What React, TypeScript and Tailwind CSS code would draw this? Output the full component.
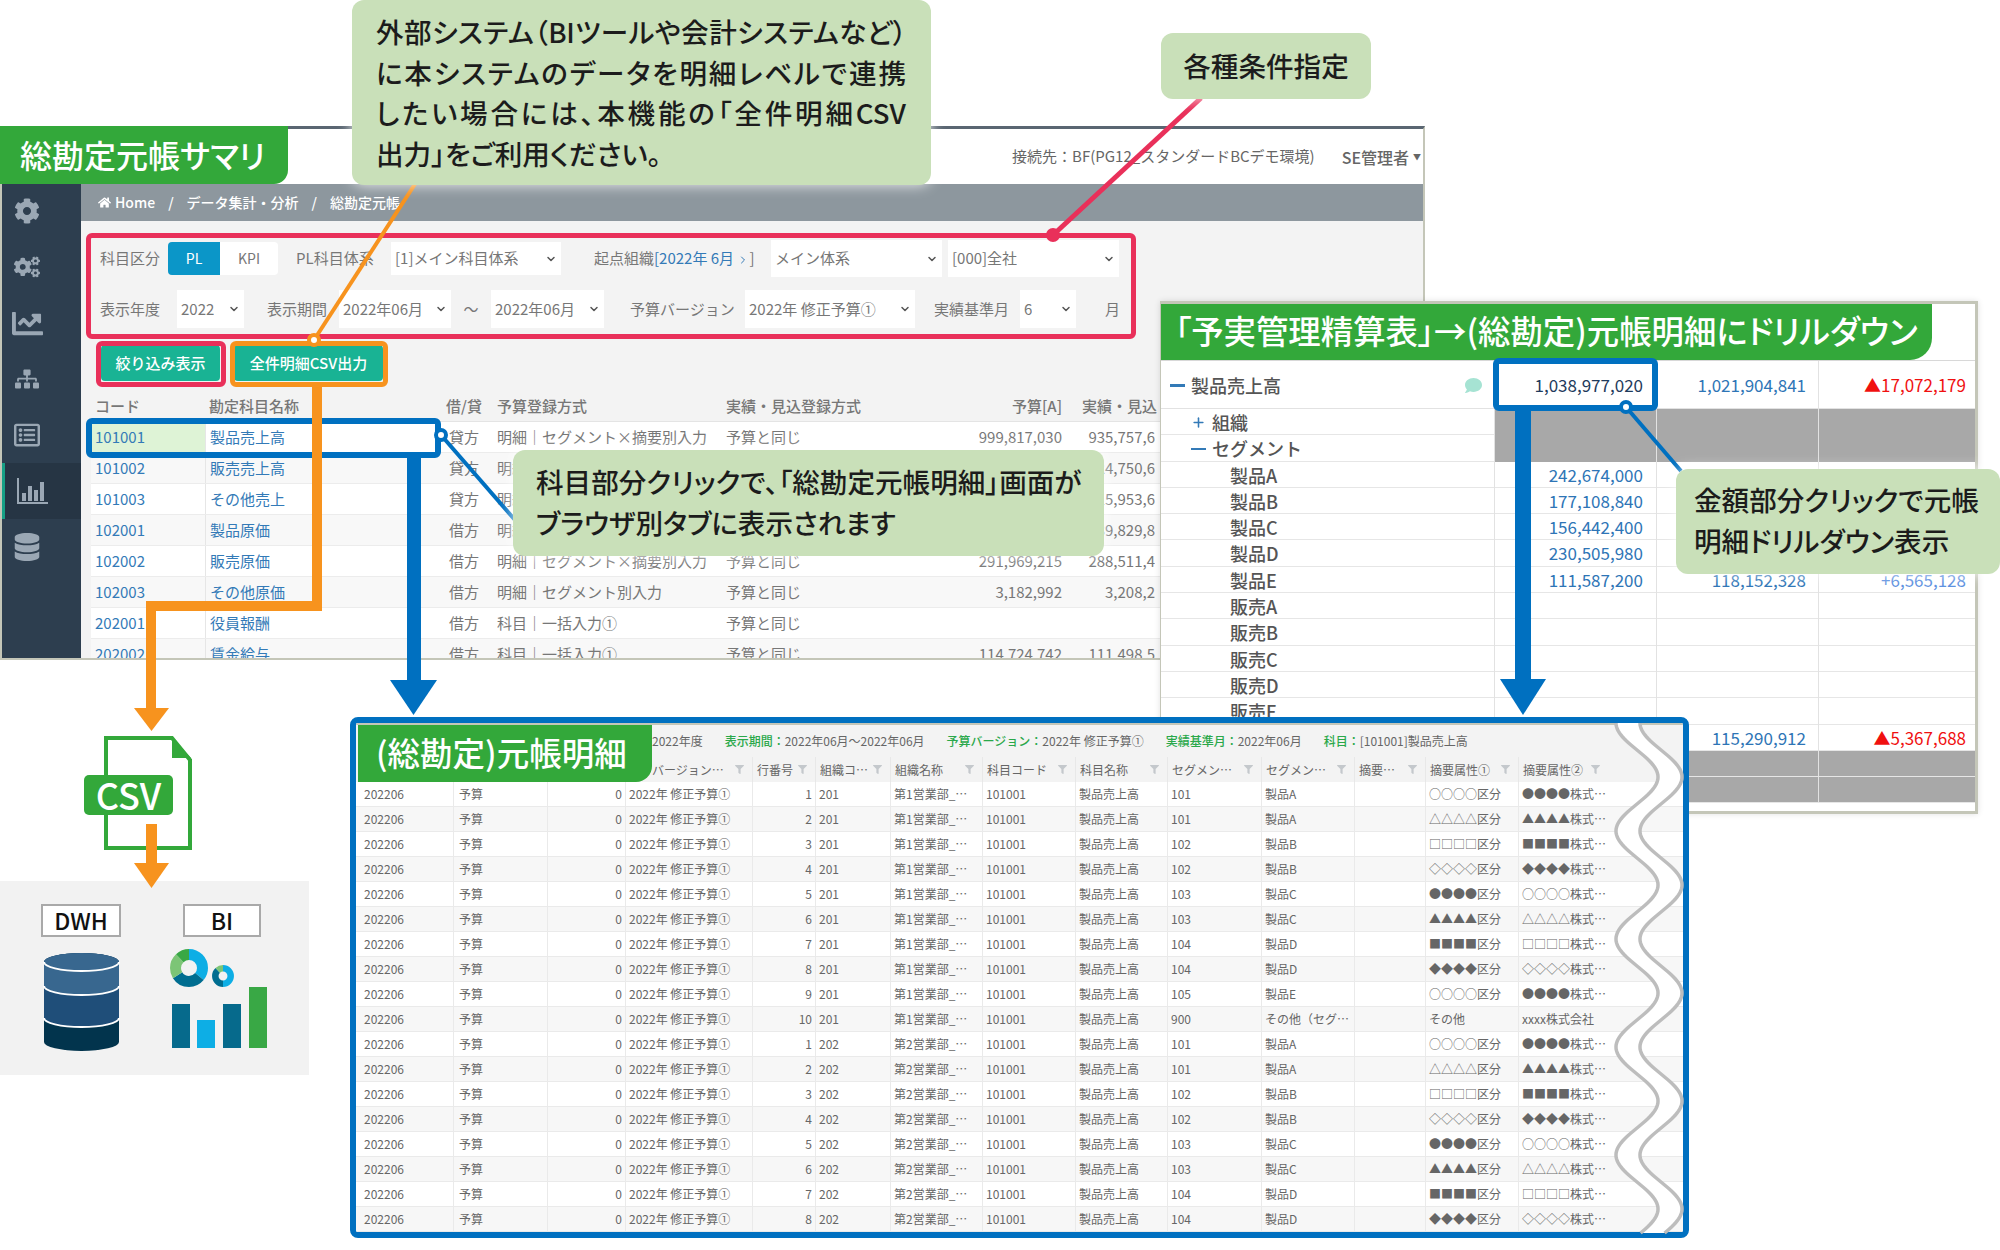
import { ChevronDown, ChevronRight, Plus } from "lucide-react";
import {
  FaCog,
  FaCogs,
  FaChartLine,
  FaSitemap,
  FaRegListAlt,
  FaDatabase,
  FaHome,
  FaFilter,
  FaComment,
} from "react-icons/fa";

function BarsIcon() {
  return (
    <svg width="31" height="26" viewBox="0 0 31 26" fill="currentColor">
      <path d="M0 0h2v24h29v2H0z" />
      <rect x="5" y="15" width="4" height="8" />
      <rect x="11" y="8" width="4" height="15" />
      <rect x="17" y="12" width="4" height="11" />
      <rect x="23" y="4" width="4" height="19" />
    </svg>
  );
}

const SIDE_ICONS = [
  <FaCog className="text-[26px]" />,
  <FaCogs className="text-[26px]" />,
  <FaChartLine className="text-[31px]" />,
  <FaSitemap className="text-[24px]" />,
  <FaRegListAlt className="text-[26px]" />,
  <BarsIcon />,
  <FaDatabase className="text-[28px]" />,
];

const SUMMARY_ROWS = [
  ["101001", "製品売上高", "貸方", "明細｜セグメント×摘要別入力", "予算と同じ", "999,817,030", "935,757,6"],
  ["101002", "販売売上高", "貸方", "明細｜セグメント×摘要別入力", "予算と同じ", "", "24,750,6"],
  ["101003", "その他売上", "貸方", "明細｜セグメント×摘要別入力", "予算と同じ", "", "15,953,6"],
  ["102001", "製品原価", "借方", "明細｜セグメント×摘要別入力", "予算と同じ", "", "39,829,8"],
  ["102002", "販売原価", "借方", "明細｜セグメント×摘要別入力", "予算と同じ", "291,969,215", "288,511,4"],
  ["102003", "その他原価", "借方", "明細｜セグメント別入力", "予算と同じ", "3,182,992", "3,208,2"],
  ["202001", "役員報酬", "借方", "科目｜一括入力①", "予算と同じ", "", ""],
  ["202002", "賃金給与", "借方", "科目｜一括入力①", "予算と同じ", "114,724,742", "111,498,5"],
];

const DRILL_ROWS: { label: string; mark?: string; num: string; plan: string; diff: string; gray?: boolean; red?: boolean }[] = [
  { label: "組織", mark: "+", num: "", plan: "", diff: "", gray: true },
  { label: "セグメント", mark: "-", num: "", plan: "", diff: "", gray: true },
  { label: "製品A", num: "242,674,000", plan: "", diff: "" },
  { label: "製品B", num: "177,108,840", plan: "", diff: "" },
  { label: "製品C", num: "156,442,400", plan: "", diff: "" },
  { label: "製品D", num: "230,505,980", plan: "", diff: "" },
  { label: "製品E", num: "111,587,200", plan: "118,152,328", diff: "+6,565,128" },
  { label: "販売A", num: "", plan: "", diff: "" },
  { label: "販売B", num: "", plan: "", diff: "" },
  { label: "販売C", num: "", plan: "", diff: "" },
  { label: "販売D", num: "", plan: "", diff: "" },
  { label: "販売E", num: "", plan: "", diff: "" },
  { label: "", num: "", plan: "115,290,912", diff: "▲5,367,688", red: true },
  { label: "", num: "", plan: "", diff: "", gray: true },
  { label: "", num: "", plan: "", diff: "", gray: true },
];

const ATTR = [
  ["○○○○区分", "●●●●株式…"],
  ["△△△△区分", "▲▲▲▲株式…"],
  ["□□□□区分", "■■■■株式…"],
  ["◇◇◇◇区分", "◆◆◆◆株式…"],
  ["●●●●区分", "○○○○株式…"],
  ["▲▲▲▲区分", "△△△△株式…"],
  ["■■■■区分", "□□□□株式…"],
  ["◆◆◆◆区分", "◇◇◇◇株式…"],
  ["○○○○区分", "●●●●株式…"],
  ["その他", "xxxx株式会社"],
];
const SEGS = [
  ["101", "製品A"],
  ["101", "製品A"],
  ["102", "製品B"],
  ["102", "製品B"],
  ["103", "製品C"],
  ["103", "製品C"],
  ["104", "製品D"],
  ["104", "製品D"],
  ["105", "製品E"],
  ["900", "その他（セグ…"],
];

const LEDGER_ROWS = Array.from({ length: 18 }, (_, i) => {
  const k = i < 10 ? i : i - 10;
  return { line: k + 1, org: i < 10 ? "201" : "202", dept: i < 10 ? "第1営業部_…" : "第2営業部_…", seg: SEGS[k], attr: ATTR[k] };
});

const LEDGER_COLS = "grid grid-cols-[97px_94px_78px_127px_63px_75px_92px_93px_92px_94px_93px_71px_93px_90px_1fr]";
const SUMMARY_COLS = "grid grid-cols-[114px_230px_58px_229px_230px_118px_1fr]";
const DRILL_COLS = "grid grid-cols-[333px_162px_162px_1fr]";

function Select({ label, className }: { label: string; className: string }) {
  return (
    <div className={`flex items-center justify-between bg-white px-1 text-[15px] text-[#777] ${className}`}>
      <span className="truncate">{label}</span>
      <ChevronDown className="size-3 shrink-0 text-[#555]" strokeWidth={3} />
    </div>
  );
}

function SummaryPanel() {
  return (
    <div className="absolute left-0 top-[126px] flex h-[534px] w-[1425px] flex-col overflow-hidden border-r-2 border-b-2 border-l-2 border-t-[3px] border-[#c4c6b8] border-t-[#5a6672] bg-white text-[#777]">
      <div className="flex h-[55px] shrink-0 items-center justify-end gap-[27px] pr-[2px] text-[15px] text-[#666]">
        <span>接続先：BF(PG12_スタンダードBCデモ環境)</span>
        <span className="flex items-center gap-1 text-[16px] font-medium">SE管理者<span className="text-[8px]">▼</span></span>
      </div>
      <div className="flex min-h-0 flex-1">
        <div className="flex w-[79px] shrink-0 flex-col overflow-hidden bg-[#2d3e4f] text-[#9aa7b4]">
          <div className="-mt-[1px]">
            {SIDE_ICONS.map((icon, i) => (
              <div key={i} className={`flex h-[56px] items-center ${i === 5 ? "border-l-[3px] border-[#16a085] bg-[#263544] pl-[12px]" : "w-[50px] justify-center"}`}>
                {icon}
              </div>
            ))}
          </div>
        </div>
        <div className="flex min-w-0 flex-1 flex-col bg-[#f3f3f3]">
          <div className="flex h-[37px] shrink-0 items-center gap-[13px] bg-[#8d979e] pl-[17px] text-[14px] font-medium text-white">
            <span className="flex items-center gap-1"><FaHome className="text-[13px]" />Home</span>
            <span>/</span>
            <span>データ集計・分析</span>
            <span>/</span>
            <span>総勘定元帳</span>
          </div>
          <div className="flex h-[170px] shrink-0 flex-col px-[19px] pt-[19px] text-[15px]">
            <div className="flex h-[37px] items-center">
              <span className="w-[68px]">科目区分</span>
              <span className="flex h-[33px] w-[52px] items-center justify-center rounded-l bg-[#0b96c8] text-[14px] text-white">PL</span>
              <span className="flex h-[33px] w-[58px] items-center justify-center rounded-r bg-white text-[14px]">KPI</span>
              <span className="ml-[18px] w-[95px]">PL科目体系</span>
              <Select label="[1]メイン科目体系" className="h-[33px] w-[170px]" />
              <span className="ml-[33px] w-[177px] whitespace-nowrap">起点組織<span className="text-[#337ab7]">[2022年 6月 <ChevronRight className="inline size-3" /></span>]</span>
              <Select label="メイン体系" className="h-[37px] w-[171px]" />
              <Select label="[000]全社" className="ml-[6px] h-[37px] w-[171px]" />
            </div>
            <div className="mt-[13px] flex h-[38px] items-center">
              <span className="w-[77px]">表示年度</span>
              <Select label="2022" className="h-[38px] w-[67px]" />
              <span className="ml-[23px] w-[72px]">表示期間</span>
              <Select label="2022年06月" className="h-[38px] w-[112px]" />
              <span className="w-[40px] text-center">～</span>
              <Select label="2022年06月" className="h-[38px] w-[113px]" />
              <span className="ml-[26px] w-[115px] whitespace-nowrap">予算バージョン</span>
              <Select label="2022年 修正予算①" className="h-[38px] w-[170px]" />
              <span className="ml-[19px] w-[86px] whitespace-nowrap">実績基準月</span>
              <Select label="6" className="h-[38px] w-[56px]" />
              <span className="ml-[29px]">月</span>
            </div>
            <div className="mt-[17px] flex gap-[14px] pl-[1px]">
              <span className="flex h-[36px] w-[119px] items-center justify-center rounded-sm bg-[#19b394] text-[15px] font-medium text-white">絞り込み表示</span>
              <span className="flex h-[36px] w-[149px] items-center justify-center rounded-sm bg-[#19b394] text-[15px] font-medium whitespace-nowrap text-white">全件明細CSV出力</span>
            </div>
          </div>
          <div className="pl-[10px] text-[15px]">
            <div className={`${SUMMARY_COLS} h-[31px] items-center border-b border-[#e4e4e4] font-medium`}>
              <span className="pl-[4px]">コード</span>
              <span className="pl-[4px]">勘定科目名称</span>
              <span className="text-center">借/貸</span>
              <span className="pl-[4px]">予算登録方式</span>
              <span className="pl-[4px]">実績・見込登録方式</span>
              <span className="pr-[8px] text-right">予算[A]</span>
              <span className="pl-[12px] whitespace-nowrap">実績・見込</span>
            </div>
            {SUMMARY_ROWS.map((r, i) => (
              <div key={r[0]} className={`${SUMMARY_COLS} h-[31px] items-center border-b border-[#ececec] ${i % 2 ? "bg-[#f8f8f8]" : "bg-white"}`}>
                <span className={`flex h-full items-center pl-[4px] text-[#337ab7] ${i === 0 ? "bg-[#def3d6]" : ""}`}>{r[0]}</span>
                <span className="flex h-full items-center border-l border-[#e6e6e6] pl-[4px] text-[#337ab7]">{r[1]}</span>
                <span className="text-center">{r[2]}</span>
                <span className="whitespace-nowrap pl-[4px]">{r[3]}</span>
                <span className="pl-[4px]">{r[4]}</span>
                <span className="pr-[8px] text-right">{r[5]}</span>
                <span className="w-[85px] overflow-hidden text-right whitespace-nowrap">{r[6]}</span>
              </div>
            ))}
          </div>
        </div>
      </div>
    </div>
  );
}

function DrillPanel() {
  return (
    <div className="absolute left-[1160px] top-[301px] h-[513px] w-[818px] overflow-hidden border-[3px] border-l border-[#c4c6b8] bg-white text-[#555] shadow-[0_0_6px_rgba(0,0,0,0.12)]">
      <div className="flex h-[57px] border-b border-[#d8d8d8]">
        <div className="flex w-[771px] items-center rounded-br-[22px] bg-[#33a83a] pb-[4px] pl-[14px] text-[32.4px] font-medium whitespace-nowrap text-white [font-feature-settings:'palt']">
          「予実管理精算表」→(総勘定)元帳明細にドリルダウン
        </div>
      </div>
      <div className={`${DRILL_COLS} h-[48px] items-center border-b border-[#e2e2e2] text-[17px]`}>
        <span className="flex items-center pl-[9px] text-[18px] font-medium">
          <span className="mr-[6px] h-[3px] w-[15px] bg-[#337ab7]" />製品売上高
          <FaComment className="ml-auto mr-[12px] text-[17px] text-[#a6e3d3]" />
        </span>
        <span className="h-full border-l border-[#e2e2e2] pr-[13px] text-right leading-[48px] text-[#1f3b5c]">1,038,977,020</span>
        <span className="h-full border-l border-[#e2e2e2] pr-[12px] text-right leading-[48px] text-[#2e75b6]">1,021,904,841</span>
        <span className="h-full border-l border-[#e2e2e2] pr-[9px] text-right leading-[48px] text-[#f01010]">▲17,072,179</span>
      </div>
      {DRILL_ROWS.map((r, i) => (
        <div key={i} className={`${DRILL_COLS} h-[26.3px] items-center border-b border-[#e6e6e6] text-[17px]`}>
          <span className={`flex items-center text-[18px] font-medium ${r.mark ? "pl-[30px]" : "pl-[69px]"}`}>
            {r.mark === "+" && <Plus className="mr-[6px] size-[15px] text-[#337ab7]" strokeWidth={2.5} />}
            {r.mark === "-" && <span className="mr-[6px] h-[2.5px] w-[15px] bg-[#337ab7]" />}
            {r.label}
          </span>
          <span className={`h-full border-l border-[#e2e2e2] pr-[13px] text-right leading-[26px] text-[#2e75b6] ${r.gray ? "bg-[#a8a8a8]" : ""}`}>{r.num}</span>
          <span className={`h-full border-l border-[#e2e2e2] pr-[12px] text-right leading-[26px] text-[#2e75b6] ${r.gray ? "bg-[#a8a8a8]" : ""}`}>{r.plan}</span>
          <span className={`h-full border-l border-[#e2e2e2] pr-[9px] text-right leading-[26px] ${r.red ? "text-[#f01010]" : "text-[#5b8fe0]"} ${r.gray ? "bg-[#a8a8a8]" : ""}`}>{r.diff}</span>
        </div>
      ))}
    </div>
  );
}

function HeadCell({ label }: { label: string }) {
  return (
    <span className="flex h-full items-center justify-between border-l border-[#e8e8e8] pl-[4px] pr-[8px] whitespace-nowrap">
      {label}
      <FaFilter className="text-[9px] text-[#c4c8cc]" />
    </span>
  );
}

function LedgerPanel() {
  return (
    <div className="absolute left-[350px] top-[717px] h-[521px] w-[1339px] overflow-hidden rounded-[8px] border-[6px] border-[#0070c0] bg-white text-[12px] text-[#666]">
      <div className="flex h-[34px] items-center gap-[22px] border-t-2 border-[#c4c6b8] bg-[#f3f3f3] pl-[296px] whitespace-nowrap">
        <span>2022年度</span>
        <span><span className="font-medium text-[#2aa84a]">表示期間：</span>2022年06月～2022年06月</span>
        <span><span className="font-medium text-[#2aa84a]">予算バージョン：</span>2022年 修正予算①</span>
        <span><span className="font-medium text-[#2aa84a]">実績基準月：</span>2022年06月</span>
        <span><span className="font-medium text-[#2aa84a]">科目：</span>[101001]製品売上高</span>
      </div>
      <div className={`${LEDGER_COLS} h-[25px] items-center bg-[#f3f3f3]`}>
        <span />
        <span />
        <span />
        <span className="flex h-full items-center justify-between pl-[27px] pr-[8px] whitespace-nowrap">バージョン…<FaFilter className="text-[9px] text-[#c4c8cc]" /></span>
        <HeadCell label="行番号" />
        <HeadCell label="組織コ…" />
        <HeadCell label="組織名称" />
        <HeadCell label="科目コード" />
        <HeadCell label="科目名称" />
        <HeadCell label="セグメン…" />
        <HeadCell label="セグメン…" />
        <HeadCell label="摘要…" />
        <HeadCell label="摘要属性①" />
        <HeadCell label="摘要属性②" />
        <span />
      </div>
      {LEDGER_ROWS.map((r, i) => (
        <div key={i} className={`${LEDGER_COLS} h-[25px] items-center border-b border-[#eaeaea] whitespace-nowrap ${i % 2 ? "bg-[#f7f7f7]" : "bg-white"}`}>
          <span className="pl-[8px]">202206</span>
          <span className="flex h-full items-center border-l border-[#eaeaea] pl-[5px]">予算</span>
          <span className="flex h-full items-center justify-end border-l border-[#eaeaea] pr-[3px]">0</span>
          <span className="flex h-full items-center border-l border-[#eaeaea] pl-[3px]">2022年 修正予算①</span>
          <span className="flex h-full items-center justify-end border-l border-[#eaeaea] pr-[3px]">{r.line}</span>
          <span className="flex h-full items-center border-l border-[#eaeaea] pl-[3px]">{r.org}</span>
          <span className="flex h-full items-center border-l border-[#eaeaea] pl-[3px]">{r.dept}</span>
          <span className="flex h-full items-center border-l border-[#eaeaea] pl-[3px]">101001</span>
          <span className="flex h-full items-center border-l border-[#eaeaea] pl-[3px]">製品売上高</span>
          <span className="flex h-full items-center border-l border-[#eaeaea] pl-[3px]">{r.seg[0]}</span>
          <span className="flex h-full items-center border-l border-[#eaeaea] pl-[3px]">{r.seg[1]}</span>
          <span className="h-full border-l border-[#eaeaea]" />
          <span className="flex h-full items-center border-l border-[#eaeaea] pl-[3px]">{r.attr[0]}</span>
          <span className="flex h-full items-center border-l border-[#eaeaea] pl-[3px]">{r.attr[1]}</span>
          <span />
        </div>
      ))}
      <div className="absolute left-[2px] top-[2px] flex h-[57px] w-[294px] items-center rounded-br-[16px] bg-[#33a83a] pb-[3px] pl-[18px] text-[32.5px] font-medium whitespace-nowrap text-white [font-feature-settings:'palt']">
        (総勘定)元帳明細
      </div>
    </div>
  );
}

// 切れ目の波線 (左右2本のカーブ)
function waveX(y: number, dx: number) {
  return 1637 + dx + 21 * Math.cos((Math.PI * (y - 777)) / 54);
}
const WAVE_Y = Array.from({ length: 256 }, (_, i) => 723 + i * 2);
const waveLine = (dx: number) => WAVE_Y.map((y) => `${waveX(y, dx).toFixed(1)},${y}`).join(" ");
const waveBand = `${waveLine(0)} ${[...WAVE_Y].reverse().map((y) => `${waveX(y, 24).toFixed(1)},${y}`).join(" ")}`;

// ラベル・コネクタ類はキャンバス座標で重ねる
function Connectors() {
  return (
    <svg className="absolute inset-0" width="2000" height="1250" viewBox="0 0 2000 1250" fill="none">
      <polygon points={waveBand} fill="#fff" />
      <polyline points={waveLine(0)} stroke="#bdbdbd" strokeWidth="3.5" />
      <polyline points={waveLine(24)} stroke="#bdbdbd" strokeWidth="3.5" />

      {/* 各種条件指定 */}
      <path d="M1201 98 L1053 235" stroke="#e9305a" strokeWidth="5" />
      <circle cx="1053" cy="235" r="7" fill="#e9305a" />

      {/* 全件明細CSV */}
      <path d="M415 184 L314 340" stroke="#f7931e" strokeWidth="4" />
      <path d="M317 387 V606 H151 V708" stroke="#f7931e" strokeWidth="10" />
      <path d="M134 708 H169 L151.5 731 Z" fill="#f7931e" />
      <circle cx="314" cy="340" r="5" fill="#fff" stroke="#f7931e" strokeWidth="4" />

      {/* 科目クリック */}
      <path d="M414 458 V680" stroke="#0070c0" strokeWidth="14" />
      <path d="M390 680 H437 L413.5 715 Z" fill="#0070c0" />
      <path d="M441 435 L515 520" stroke="#0070c0" strokeWidth="4" />
      <circle cx="441" cy="435" r="5" fill="#fff" stroke="#0070c0" strokeWidth="4" />

      {/* 金額クリック */}
      <path d="M1523 411 V680" stroke="#0070c0" strokeWidth="16" />
      <path d="M1500 679 H1546 L1523 715 Z" fill="#0070c0" />
      <path d="M1626 407 L1681 471" stroke="#0070c0" strokeWidth="4" />
      <circle cx="1626" cy="407" r="5" fill="#fff" stroke="#0070c0" strokeWidth="4" />
    </svg>
  );
}

function CsvAndTools() {
  return (
    <svg className="absolute inset-0" width="2000" height="1250" viewBox="0 0 2000 1250" fill="none">
      <path d="M106 738 H172 L190 760 V848 H106 Z" fill="#fff" stroke="#33a83a" strokeWidth="4" />
      <path d="M172 738 L191 758 H172 Z" fill="#33a83a" />
      <path d="M151.5 824 V864" stroke="#f7931e" strokeWidth="11" />
      <path d="M134 863 H169 L151.5 888 Z" fill="#f7931e" />

      {/* DB */}
      <path d="M44 962 A37.5 9 0 0 1 119 962 V1042 A37.5 9 0 0 1 44 1042 Z" fill="#02344d" />
      <path d="M44 962 A37.5 9 0 0 1 119 962 V1018 A37.5 9 0 0 1 44 1018 Z" fill="#1f4e79" />
      <path d="M44 962 A37.5 9 0 0 1 119 962 V986 A37.5 9 0 0 1 44 986 Z" fill="#38678f" />
      <path d="M44 986 A37.5 9 0 0 0 119 986 M44 1018 A37.5 9 0 0 0 119 1018 M44 962 A37.5 9 0 0 0 119 962" stroke="#fff" strokeWidth="2" />

      {/* ドーナツ */}
      <g transform="rotate(-90 189 968)" strokeWidth="11">
        <circle cx="189" cy="968" r="13.5" stroke="#0daee5" pathLength={100} strokeDasharray="36 64" />
        <circle cx="189" cy="968" r="13.5" stroke="#006d90" pathLength={100} strokeDasharray="30 70" strokeDashoffset="-36" />
        <circle cx="189" cy="968" r="13.5" stroke="#7cc576" pathLength={100} strokeDasharray="22 78" strokeDashoffset="-66" />
        <circle cx="189" cy="968" r="13.5" stroke="#39a845" pathLength={100} strokeDasharray="12 88" strokeDashoffset="-88" />
      </g>
      <g transform="rotate(-90 223 976)" strokeWidth="6.5">
        <circle cx="223" cy="976" r="7.7" stroke="#0daee5" pathLength={100} strokeDasharray="50 50" />
        <circle cx="223" cy="976" r="7.7" stroke="#006d90" pathLength={100} strokeDasharray="38 62" strokeDashoffset="-50" />
        <circle cx="223" cy="976" r="7.7" stroke="#7cc576" pathLength={100} strokeDasharray="12 88" strokeDashoffset="-88" />
      </g>
      <rect x="172" y="1004" width="18" height="44" fill="#066a8c" />
      <rect x="197" y="1020" width="18" height="28" fill="#0daee5" />
      <rect x="223" y="1004" width="18" height="44" fill="#066a8c" />
      <rect x="249" y="987" width="18" height="61" fill="#39a845" />
    </svg>
  );
}

export default function App() {
  const callout = "absolute rounded-[12px] bg-[#c9e0b9] text-[27.6px] font-medium text-[#1c1c1c] shadow-[0_0_14px_rgba(255,255,255,0.85)] [font-feature-settings:'palt'] whitespace-nowrap";
  const justified = "block w-[530px] whitespace-normal text-justify [text-align-last:justify]";
  return (
    <div className="relative h-[1250px] w-[2000px] overflow-hidden bg-white [font-family:'Noto_Sans_CJK_JP','Noto_Sans',sans-serif]">
      <SummaryPanel />
      <DrillPanel />

      {/* DWH / BI 背景 */}
      <div className="absolute left-0 top-[881px] h-[194px] w-[309px] bg-[#f2f2f2]" />
      <LedgerPanel />

      <div className="absolute left-[86px] top-[233px] h-[106px] w-[1050px] rounded-[6px] border-[5px] border-[#e9305a]" />
      <div className="absolute left-[96px] top-[341px] h-[46px] w-[130px] rounded-[6px] border-[5px] border-[#e9305a]" />
      <div className="absolute left-[230px] top-[341px] h-[46px] w-[158px] rounded-[6px] border-[5px] border-[#f7931e]" />
      <div className="absolute left-[86px] top-[418px] h-[40px] w-[355px] rounded-[6px] border-[6px] border-[#0070c0]" />
      <div className="absolute left-[1493px] top-[358px] h-[53px] w-[165px] rounded-[6px] border-[6px] border-[#0070c0]" />

      <Connectors />
      <CsvAndTools />

      <div className="absolute left-[84px] top-[775px] flex h-[40px] w-[89px] items-center justify-center rounded-[5px] bg-[#33a83a] pb-[3px] text-[36px] leading-none font-medium text-white">CSV</div>
      <div className="absolute left-[41px] top-[904px] flex h-[33px] w-[80px] items-center justify-center border-2 border-[#a9a9a9] bg-white text-[23px] font-medium text-[#111]">DWH</div>
      <div className="absolute left-[183px] top-[904px] flex h-[33px] w-[78px] items-center justify-center border-2 border-[#a9a9a9] bg-white text-[23px] font-medium text-[#111]">BI</div>

      <div className="absolute left-0 top-[126px] flex h-[58px] w-[288px] items-center rounded-br-[14px] bg-[#33a83a] pb-[3px] pl-[20px] text-[32px] font-medium whitespace-nowrap text-white [font-feature-settings:'palt']">
        総勘定元帳サマリ
      </div>

      <div className={`${callout} left-[352px] top-0 h-[185px] w-[579px] pl-[24px] pt-[11px] leading-[40.6px]`}>
        <span className={`${justified} tracking-[-0.6px]`}>外部システム（BIツールや会計システムなど）</span>
        <span className={justified}>に本システムのデータを明細レベルで連携</span>
        <span className={justified}>したい場合には、本機能の「全件明細CSV</span>
        <span className="block">出力」をご利用ください。</span>
      </div>
      <div className={`${callout} left-[1161px] top-[33px] flex h-[66px] w-[210px] items-center justify-center`}>
        各種条件指定
      </div>
      <div className={`${callout} left-[513px] top-[450px] h-[106px] w-[591px] pl-[23px] pt-[11px] leading-[40.6px]`}>
        科目部分クリックで、「総勘定元帳明細」画面が<br />
        ブラウザ別タブに表示されます
      </div>
      <div className={`${callout} left-[1676px] top-[469px] h-[105px] w-[324px] pl-[18px] pt-[10px] leading-[41px]`}>
        金額部分クリックで元帳<br />
        明細ドリルダウン表示
      </div>
    </div>
  );
}
